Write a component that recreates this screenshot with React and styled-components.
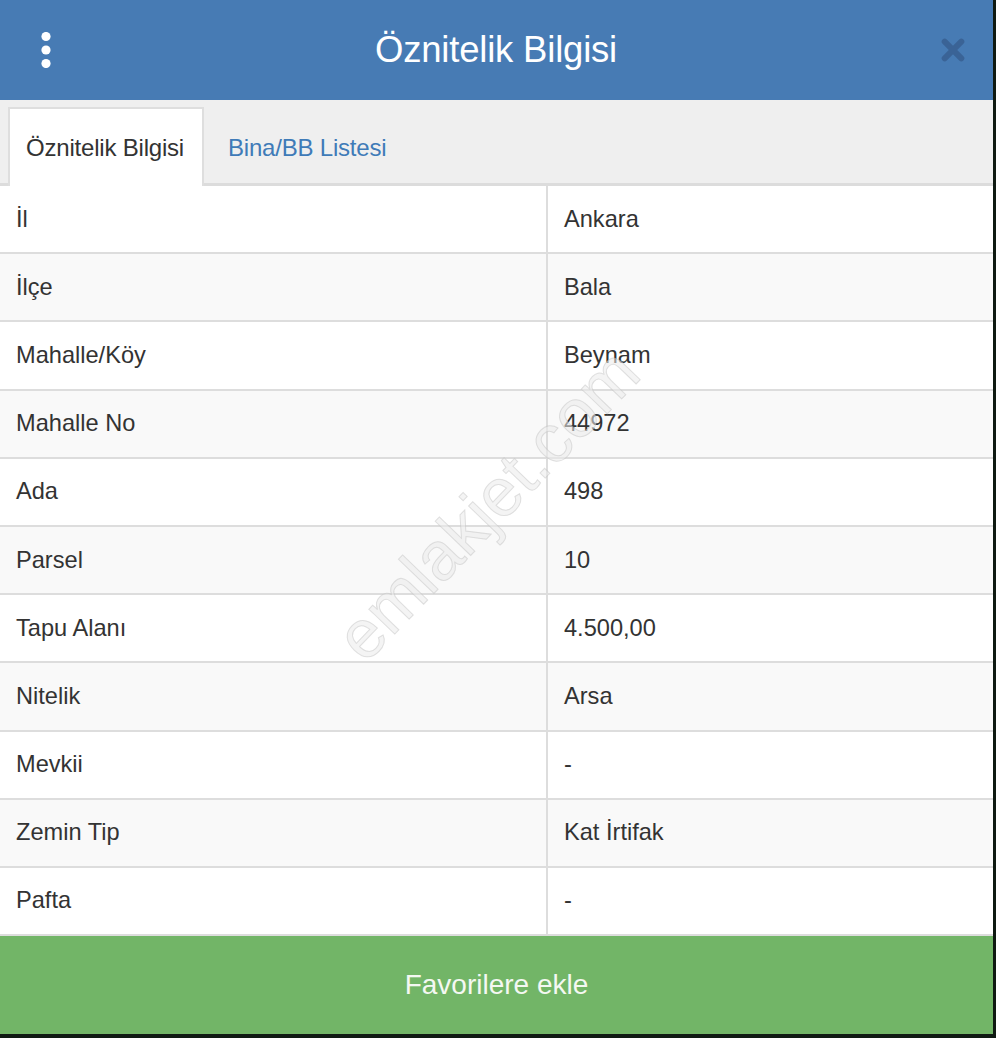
import styled, { createGlobalStyle } from 'styled-components';

const GlobalStyle = createGlobalStyle`
    html, body {
        margin: 0;
        padding: 0;
        background: #0f1a12;
    }
    * {
        box-sizing: border-box;
    }
`;

const Panel = styled.div`
    position: relative;
    width: 993px;
    height: 1034px;
    display: flex;
    flex-direction: column;
    background: #fff;
    font-family: "Liberation Sans", Arial, sans-serif;
    overflow: hidden;
`;

const Header = styled.header`
    height: 100px;
    flex: none;
    background: #477bb4;
    display: grid;
    grid-template-columns: 1fr auto 1fr;
    align-items: center;
    padding: 0 28px 0 34px;
`;

const Title = styled.h1`
    margin: 0 0 0 -7px;
    font-size: 36.5px;
    font-weight: normal;
    color: #fff;
    letter-spacing: -0.2px;
`;

const IconButton = styled.button`
    justify-self: ${p => (p.$end ? 'end' : 'start')};
    border: 0;
    background: none;
    padding: 0;
    width: 24px;
    height: 40px;
    display: flex;
    align-items: center;
    justify-content: center;
    cursor: pointer;
`;

const TabBar = styled.nav`
    height: 86px;
    flex: none;
    background: #efefef;
    border-bottom: 3px solid #dcdcdc;
    display: flex;
    align-items: flex-end;
    padding-left: 8px;
`;

const Tab = styled.div`
    height: 79px;
    margin-bottom: -3px;
    padding: 0 18px 0 16px;
    margin-right: 6px;
    display: flex;
    align-items: center;
    font-size: 24px;
    letter-spacing: -0.2px;
    color: ${p => (p.$active ? '#333' : '#3f7bb8')};
    background: ${p => (p.$active ? '#fff' : 'transparent')};
    border: 2px solid ${p => (p.$active ? '#dedede' : 'transparent')};
    border-bottom: 0;
`;

const Table = styled.div`
    flex: 1;
    display: flex;
    flex-direction: column;
`;

const Row = styled.div`
    height: 68.2px;
    display: grid;
    grid-template-columns: 546px 1fr;
    background: ${p => (p.$striped ? '#f9f9f9' : '#fff')};
    border-bottom: 2px solid #dddddd;
`;

const Cell = styled.div`
    display: flex;
    align-items: center;
    padding-left: 16px;
    font-size: 23.6px;
    color: #333;
    border-left: ${p => (p.$value ? '2px solid #dddddd' : '0')};
`;

const Footer = styled.button`
    height: 98px;
    flex: none;
    border: 0;
    background: #72b567;
    color: #f4f8f2;
    font-family: inherit;
    font-size: 28px;
    cursor: pointer;
`;

const Watermark = styled.div`
    position: absolute;
    left: 487px;
    top: 504px;
    transform: translate(-50%, -50%) rotate(-46deg);
    font-size: 68px;
    white-space: nowrap;
    color: rgba(235, 235, 235, 0.55);
    -webkit-text-stroke: 1px rgba(190, 190, 190, 0.45);
    pointer-events: none;
`;

const rows = [
    ['İl', 'Ankara'],
    ['İlçe', 'Bala'],
    ['Mahalle/Köy', 'Beynam'],
    ['Mahalle No', '44972'],
    ['Ada', '498'],
    ['Parsel', '10'],
    ['Tapu Alanı', '4.500,00'],
    ['Nitelik', 'Arsa'],
    ['Mevkii', '-'],
    ['Zemin Tip', 'Kat İrtifak'],
    ['Pafta', '-'],
];

function App() {
    return (
        <>
            <GlobalStyle />
            <Panel>
                <Header>
                    <IconButton aria-label="menu">
                        <svg width="12" height="36" viewBox="0 0 12 36">
                            <circle cx="6" cy="4.5" r="4.6" fill="#fff" />
                            <circle cx="6" cy="18" r="4.6" fill="#fff" />
                            <circle cx="6" cy="31.5" r="4.6" fill="#fff" />
                        </svg>
                    </IconButton>
                    <Title>Öznitelik Bilgisi</Title>
                    <IconButton $end aria-label="kapat">
                        <svg width="26" height="26" viewBox="0 0 26 26">
                            <path d="M4 4 L22 22 M22 4 L4 22" stroke="#3a6396" strokeWidth="6.5" strokeLinecap="round" />
                        </svg>
                    </IconButton>
                </Header>
                <TabBar>
                    <Tab $active>Öznitelik Bilgisi</Tab>
                    <Tab>Bina/BB Listesi</Tab>
                </TabBar>
                <Table>
                    {rows.map(([label, value], i) => (
                        <Row key={label} $striped={i % 2 === 1}>
                            <Cell>{label}</Cell>
                            <Cell $value>{value}</Cell>
                        </Row>
                    ))}
                </Table>
                <Footer>Favorilere ekle</Footer>
                <Watermark>emlakjet.com</Watermark>
            </Panel>
        </>
    );
}

export default App;
